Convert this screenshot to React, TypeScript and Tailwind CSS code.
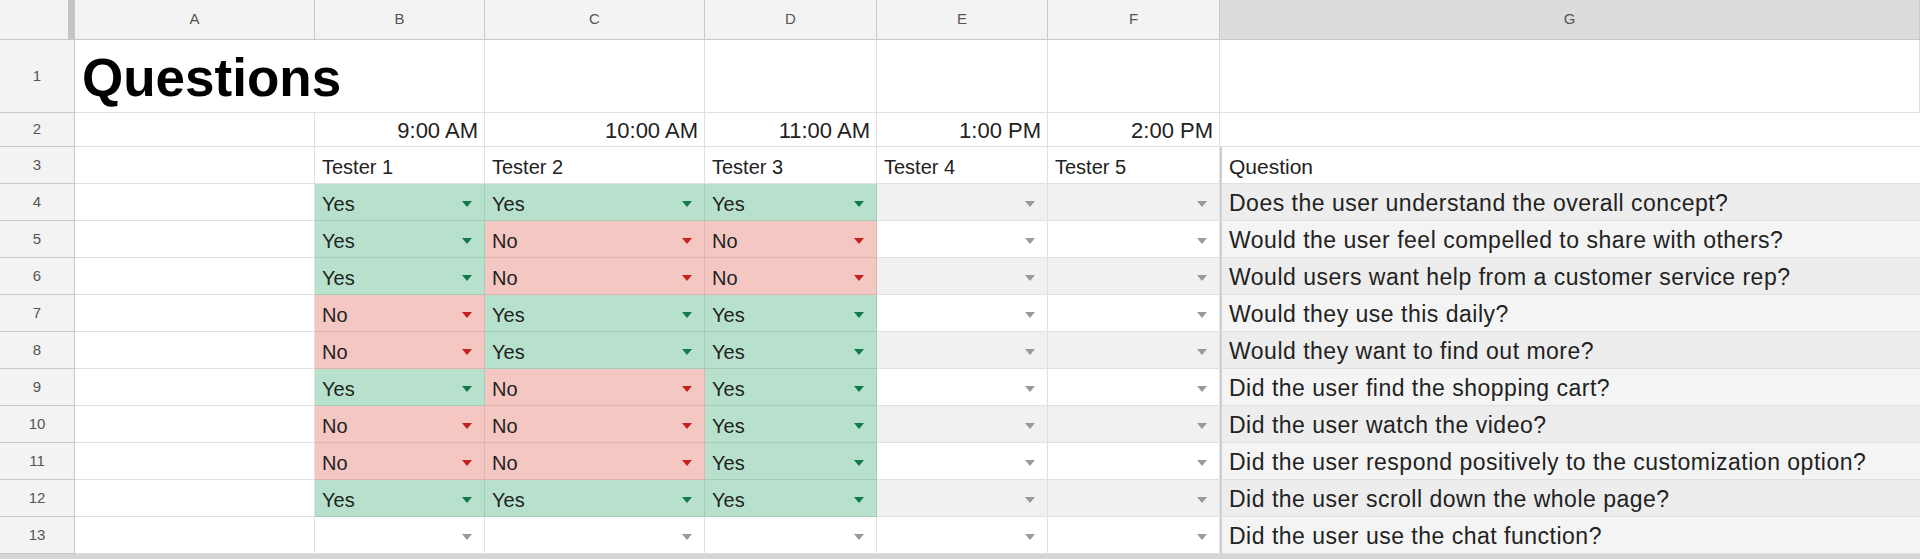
import React from "react";

type Val = "Yes" | "No" | "";

interface Row {
  n: number;
  answers: Val[];
  question: string;
}

const rows: Row[] = [
  { n: 4, answers: ["Yes", "Yes", "Yes", "", ""], question: "Does the user understand the overall concept?" },
  { n: 5, answers: ["Yes", "No", "No", "", ""], question: "Would the user feel compelled to share with others?" },
  { n: 6, answers: ["Yes", "No", "No", "", ""], question: "Would users want help from a customer service rep?" },
  { n: 7, answers: ["No", "Yes", "Yes", "", ""], question: "Would they use this daily?" },
  { n: 8, answers: ["No", "Yes", "Yes", "", ""], question: "Would they want to find out more?" },
  { n: 9, answers: ["Yes", "No", "Yes", "", ""], question: "Did the user find the shopping cart?" },
  { n: 10, answers: ["No", "No", "Yes", "", ""], question: "Did the user watch the video?" },
  { n: 11, answers: ["No", "No", "Yes", "", ""], question: "Did the user respond positively to the customization option?" },
  { n: 12, answers: ["Yes", "Yes", "Yes", "", ""], question: "Did the user scroll down the whole page?" },
  { n: 13, answers: ["", "", "", "", ""], question: "Did the user use the chat function?" },
];

const times = ["9:00 AM", "10:00 AM", "11:00 AM", "1:00 PM", "2:00 PM"];
const letters = ["A", "B", "C", "D", "E", "F", "G"];

const grid =
  "grid grid-cols-[75px_240px_170px_220px_172px_171px_172px_1fr] font-['Liberation_Sans',Arial,sans-serif] text-[#222]";

// little dropdown triangle, colour follows the cell
function Caret({ val }: { val: Val }) {
  const fill = val === "Yes" ? "#137a4b" : val === "No" ? "#c5221f" : "#9a9a9a";
  return (
    <svg width="10" height="6" viewBox="0 0 10 6" className="shrink-0">
      <path d="M0 0 L10 0 L5 6 Z" fill={fill} />
    </svg>
  );
}

function RowHead({ label, h }: { label: string; h: string }) {
  return (
    <div
      className={`${h} flex items-center justify-center bg-[#f3f3f3] border-r border-b border-[#c8c8c8] text-[15px] text-[#555]`}
    >
      {label}
    </div>
  );
}

function Dropdown({ val, banded }: { val: Val; banded: boolean }) {
  const bg =
    val === "Yes"
      ? "bg-[#b7e1cd] border-[#a3cdb9]"
      : val === "No"
      ? "bg-[#f4c7c3] border-[#e0b3af]"
      : banded
      ? "bg-[#f1f1f1] border-[#e0e0e0]"
      : "bg-white border-[#e0e0e0]";
  return (
    <div className={`h-[37px] flex items-center justify-between pl-[7px] pr-[12px] pt-[3px] border-r border-b ${bg}`}>
      <span className="text-[20px]">{val}</span>
      <Caret val={val} />
    </div>
  );
}

export default function App() {
  return (
    <div className="w-[1920px] h-[559px] overflow-hidden bg-white">
      <div className={grid}>
        {/* column letters */}
        <div className="h-[40px] flex bg-[#f3f3f3] border-b border-[#c8c8c8]">
          <div className="flex-1" />
          <div className="w-[7px] bg-[#c4c4c4]" />
        </div>
        {letters.map((l) => (
          <div
            key={l}
            className={`h-[40px] flex items-center justify-center border-r border-b border-[#c8c8c8] text-[15px] text-[#555] ${
              l === "G" ? "bg-[#dcdcdc]" : "bg-[#f3f3f3]"
            }`}
          >
            {l}
          </div>
        ))}

        {/* row 1 */}
        <RowHead label="1" h="h-[73px]" />
        <div className="col-span-2 h-[73px] flex items-center pl-[7px] pt-[2px] border-r border-b border-[#e0e0e0]">
          <span className="text-[53px] font-bold text-black leading-none">Questions</span>
        </div>
        {[0, 1, 2, 3, 4].map((i) => (
          <div key={i} className="h-[73px] border-r border-b border-[#e0e0e0]" />
        ))}

        {/* row 2 */}
        <RowHead label="2" h="h-[34px]" />
        <div className="h-[34px] border-r border-b border-[#e0e0e0]" />
        {times.map((t) => (
          <div key={t} className="h-[34px] flex items-center justify-end pr-[6px] pt-[2px] border-r border-b border-[#e0e0e0] text-[22px]">
            {t}
          </div>
        ))}
        <div className="h-[34px] border-b border-[#e0e0e0]" />

        {/* row 3 */}
        <RowHead label="3" h="h-[37px]" />
        <div className="h-[37px] border-r border-b border-[#e0e0e0]" />
        {[1, 2, 3, 4, 5].map((n) => (
          <div key={n} className="h-[37px] flex items-center pl-[7px] pt-[3px] border-r border-b border-[#e0e0e0] text-[20px]">
            Tester {n}
          </div>
        ))}
        <div className="h-[37px] flex items-center pl-[7px] pt-[3px] border-b border-[#e0e0e0] border-l-2 border-l-[#cfcfcf] text-[21px]">
          Question
        </div>

        {/* answer rows */}
        {rows.map((r) => {
          const banded = r.n % 2 === 0;
          return (
            <React.Fragment key={r.n}>
              <RowHead label={String(r.n)} h="h-[37px]" />
              <div className="h-[37px] border-r border-b border-[#e0e0e0]" />
              {r.answers.map((a, i) => (
                <Dropdown key={i} val={a} banded={banded} />
              ))}
              <div
                className={`h-[37px] flex items-center pl-[7px] pt-[3px] border-b border-[#e0e0e0] border-l-2 border-l-[#cfcfcf] text-[23px] tracking-[0.5px] whitespace-nowrap ${
                  banded ? "bg-[#ededed]" : "bg-[#f4f4f4]"
                }`}
              >
                {r.question}
              </div>
            </React.Fragment>
          );
        })}
      </div>
      <div className="h-[6px] bg-[#d6d6d6]" />
    </div>
  );
}
